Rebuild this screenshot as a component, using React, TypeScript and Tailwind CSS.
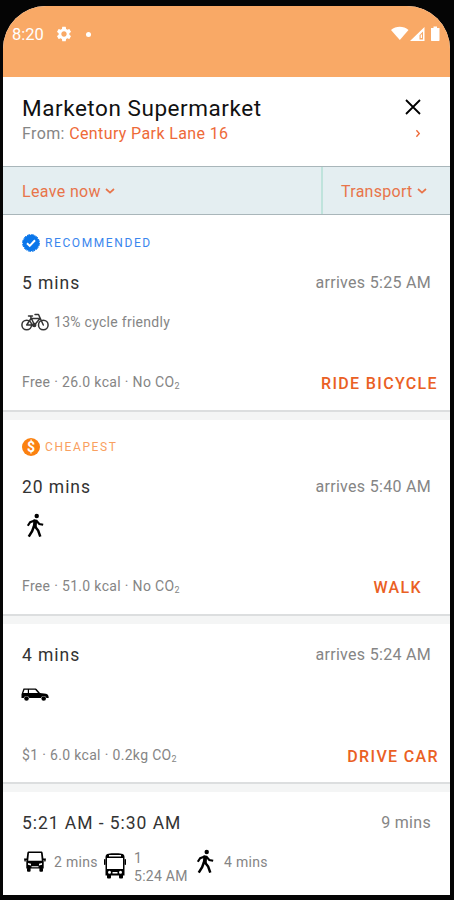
import type { ReactNode } from "react";
import { MdSettings } from "react-icons/md";

function Chevron({ className }: { className: string }) {
  return (
    <svg viewBox="0 0 10 6" fill="none" stroke="currentColor" strokeWidth="1.7" className={className}>
      <path d="M1 1l4 3.6L9 1" />
    </svg>
  );
}

function CheckBadge() {
  return (
    <svg viewBox="0 0 18 18" className="size-[18px]" fill="none">
      <circle cx="9" cy="9" r="8.300" fill="#0a76ea" />
      <circle cx="9" cy="9" r="8.400" stroke="#0a76ea" strokeWidth="1" strokeDasharray="3.200 1.198" />
      <path d="M5 9.300l2.700 2.600L13 6.300" stroke="#fff" strokeWidth="2" />
    </svg>
  );
}

function DollarBadge() {
  return (
    <span className="flex size-[18px] items-center justify-center rounded-full bg-[#fb8110] text-[14px] leading-none font-bold tracking-normal text-white">
      $
    </span>
  );
}

function Bicycle() {
  return (
    <svg viewBox="0 0 28 20" className="-ml-px h-5 w-7 shrink-0" fill="none" stroke="#333" strokeWidth="1.5" strokeLinecap="round" strokeLinejoin="round">
      <circle cx="5.700" cy="13" r="4.800" />
      <circle cx="22.300" cy="13" r="4.800" />
      <path d="M5.700 13l4.300-6.500h9l-5.500 6.500H5.700M9.500 4.500l4 8.500M22.300 13L17.500 2.500h-3.500M7.500 4h4" />
      <circle cx="13.200" cy="13" r="1.500" fill="#333" />
    </svg>
  );
}

function Walker({ className }: { className: string }) {
  return (
    <svg viewBox="0 0 18 26" className={className} fill="none" stroke="#000">
      <circle cx="10.800" cy="3.200" r="2.300" fill="#000" stroke="none" />
      <path d="M9.300 7L8.700 15" strokeWidth="4" />
      <path d="M9.500 7.500L4 9.500 1.500 13.300M10.500 8l3 3.400 4 .9" strokeWidth="2.200" />
      <path d="M8 13.500L6 19 2.500 24.500M9 14l3.300 4.200 2.200 6.300" strokeWidth="2.600" />
    </svg>
  );
}

function Car() {
  return (
    <svg viewBox="0 0 28 13" className="-ml-px h-[13px] w-7" fill="#000">
      <path fillRule="evenodd" d="M2.500.5H14c1 0 1.500.3 2 1l3 3.500 6 .8c1.800.3 2.700 1.500 2.700 4.200h-2.200a3 3 0 0 0-5.600 0H8.300a3 3 0 0 0-5.600 0H.5V6.200zM3.500 1.700L2.300 5H6.800V1.700zM8 1.700V5h9l-2.800-3.300z" />
      <circle cx="5.500" cy="10.500" r="2.300" />
      <circle cx="22.700" cy="10.500" r="2.300" />
    </svg>
  );
}

function Taxi() {
  return (
    <svg viewBox="0 0 22 21" className="h-[21px] w-[22px]" fill="#000">
      <path fillRule="evenodd" d="M5 .5h12c1 0 1.500.4 1.700 1.400L19.700 10v7.500H2.300V10L3.300 1.900C3.500.9 4 .5 5 .5zM5 2L4.200 9.700h13.600L17 2zM4 12v1.700l3 .8v-1.700zM18 12v1.700l-3 .8v-1.700zM7.500 15.300v.9h7v-.9z" />
      <path d="M0 7.500h3v1.600H1.800v1.300H.5zM22 7.500h-3v1.600h1.200v1.300h1.300z" />
      <rect x="3" y="16.500" width="3.600" height="4.300" rx="1" />
      <rect x="15.400" y="16.500" width="3.600" height="4.300" rx="1" />
    </svg>
  );
}

function Bus() {
  return (
    <svg viewBox="0 0 22 26" className="h-[26px] w-[22px]" fill="#000">
      <path fillRule="evenodd" d="M4.500.7C8 .1 14 .1 17.500.7c2 .3 3 1.300 3 3.300V22.500h-19V4c0-2 1-3 3-3.300zM5 2v1.500h12V2zM3 5V16h16V5zM5.500 17.800a1.500 1.500 0 1 0 0 3 1.500 1.500 0 0 0 0-3zM16.500 17.800a1.500 1.500 0 1 0 0 3 1.500 1.500 0 0 0 0-3zM8.500 19v1.500h5V19z" />
      <rect x="0" y="6" width="1.500" height="6" rx=".7" />
      <rect x="20.500" y="6" width="1.500" height="6" rx=".7" />
      <rect x="3" y="21" width="4" height="4.500" rx="1" />
      <rect x="15" y="21" width="4" height="4.500" rx="1" />
    </svg>
  );
}

function StatusIcons() {
  return (
    <svg viewBox="0 0 51 16" className="h-4 w-[51px]" fill="#fff">
      <path d="M0 4C5-.2 12.500-.2 17.500 4L8.800 14z" />
      <path fillRule="evenodd" d="M33.500 1v14H19zM32 5.500L28.500 9v4.500H32z" />
      <path d="M29.700 8.500h1.300v3.500h-1.300z" />
      <path d="M42.500.5h3.500V2h2.500v12c0 .7-.3 1-1 1H41c-.7 0-1-.3-1-1V2h2.500z" />
    </svg>
  );
}

function Title({ left, right }: { left: string; right: string }) {
  return (
    <div className="flex h-6 items-center justify-between pr-[19px] pb-[2px]">
      <span className="text-[17.5px] leading-5 tracking-[0.95px] text-[#333]">{left}</span>
      <span className="text-[16px] leading-5 tracking-[0.3px] text-[#858585]">{right}</span>
    </div>
  );
}

function Footer({ text, action, pad }: { text: string; action: string; pad: string }) {
  return (
    <div className={"flex h-6 items-center justify-between " + pad}>
      <span className="text-[14px] leading-5 tracking-[0.33px] text-[#858585]">
        {text}
        <sub className="text-[9px] tracking-normal">2</sub>
      </span>
      <span className="pt-[3px] text-[16px] leading-5 font-medium tracking-[1.35px] text-[#ea6024]">{action}</span>
    </div>
  );
}

function Card({ className, children }: { className: string; children: ReactNode }) {
  return <section className={"shrink-0 bg-white pl-[19px] " + className}>{children}</section>;
}

function Gap() {
  return <div className="h-[10px] shrink-0 border-t-2 border-[#dcdedf] bg-[#f4f5f5]" />;
}

export default function App() {
  return (
    <div className="h-[900px] w-[454px] bg-[#050505] pt-[6px] pl-[3px] font-['Roboto',sans-serif] whitespace-nowrap">
      <main className="flex h-[889px] w-[447px] flex-col overflow-hidden rounded-t-[43px] bg-white">
        <div className="flex h-[71px] shrink-0 items-start justify-between bg-[#f9a966] pt-[18px] pr-[8px] pl-[9px] text-white">
          <div className="flex h-5 items-center">
            <span className="w-[43px] pt-[2px] text-[16.5px]">8:20</span>
            <MdSettings className="size-[18px]" />
            <span className="ml-[13px] size-[5px] rounded-full bg-white" />
          </div>
          <div className="flex h-5 items-center">
            <StatusIcons />
          </div>
        </div>

        <header className="h-[89px] shrink-0 pt-[16px] pr-[29px] pl-[19px]">
          <div className="flex h-7 items-center justify-between">
            <h1 className="pt-[2px] text-[22.5px] leading-7 tracking-[0.55px] text-[#111]">Marketon Supermarket</h1>
            <svg viewBox="0 0 16 16" className="size-4" stroke="#000" strokeWidth="1.8">
              <path d="M1 1l14 14M15 1L1 15" />
            </svg>
          </div>
          <div className="-mr-px flex h-6 items-center justify-between pt-px text-[16px] tracking-[0.38px]">
            <p className="text-[#858585]">
              From: <span className="text-[#ee6a38]">Century Park Lane 16</span>
            </p>
            <Chevron className="h-[5px] w-2 -rotate-90 text-[#ee6a38]" />
          </div>
        </header>

        <nav className="flex h-[49px] shrink-0 border-y border-[#a9b6ba] bg-[#e4eef1] text-[16px] text-[#e8744a]">
          <div className="flex flex-1 items-center gap-1 pl-[19px] tracking-[0.35px]">
            <span className="pt-[2px]">Leave now</span>
            <Chevron className="h-[6px] w-[10px]" />
          </div>
          <div className="flex w-[129px] items-center gap-1 border-l-2 border-[#bfe3dc] pl-[18px] tracking-[0.28px]">
            <span className="pt-[2px]">Transport</span>
            <Chevron className="h-[6px] w-[10px]" />
          </div>
        </nav>

        <Card className="h-[195px] pt-[18px]">
          <div className="flex h-5 items-center gap-[5px] text-[12px] tracking-[1.6px] text-[#3a86ee]">
            <CheckBadge />
            <span className="pb-px leading-4">RECOMMENDED</span>
          </div>
          <div className="h-[19px]" />
          <Title left="5 mins" right="arrives 5:25 AM" />
          <div className="mt-[14px] mb-[36px] flex h-6 items-center gap-[5px] text-[14px] tracking-[0.28px] text-[#858585]">
            <Bicycle />
            13% cycle friendly
          </div>
          <Footer text="Free · 26.0 kcal · No CO" action="RIDE BICYCLE" pad="pr-[12px]" />
        </Card>
        <Gap />
        <Card className="h-[194px] pt-[17px]">
          <div className="flex h-5 items-center gap-[5px] text-[12px] tracking-[1.6px] text-[#f9a060]">
            <DollarBadge />
            <span className="pb-px leading-4">CHEAPEST</span>
          </div>
          <div className="h-[19px]" />
          <Title left="20 mins" right="arrives 5:40 AM" />
          <div className="mt-[13px] mb-[37px] flex h-6 items-center pl-[4px]">
            <Walker className="h-[25px] w-[18px]" />
          </div>
          <Footer text="Free · 51.0 kcal · No CO" action="WALK" pad="pr-[28px]" />
        </Card>
        <Gap />
        <Card className="h-[158px] pt-[20px]">
          <Title left="4 mins" right="arrives 5:24 AM" />
          <div className="mt-[14px] mb-[37px] flex h-6 items-center">
            <Car />
          </div>
          <Footer text="$1 · 6.0 kcal · 0.2kg CO" action="DRIVE CAR" pad="pr-[11px]" />
        </Card>
        <Gap />
        <Card className="h-[103px] pt-[20px]">
          <Title left="5:21 AM - 5:30 AM" right="9 mins" />
          <div className="mt-[7px] flex h-[42px] items-start text-[14px] tracking-[0.28px] text-[#858585]">
            <div className="flex h-[37px] w-[82px] items-center gap-[8px] pl-[2px]">
              <Taxi />
              <span className="pt-px">2 mins</span>
            </div>
            <div className="flex h-[45px] w-[92px] items-center gap-[8px]">
              <Bus />
              <div className="pt-[2px] leading-[18px]">
                <div>1</div>
                <div>5:24 AM</div>
              </div>
            </div>
            <div className="flex h-[37px] items-center gap-[10px]">
              <Walker className="h-[25px] w-[18px]" />
              <span className="pt-[2px]">4 mins</span>
            </div>
          </div>
        </Card>
      </main>
    </div>
  );
}
